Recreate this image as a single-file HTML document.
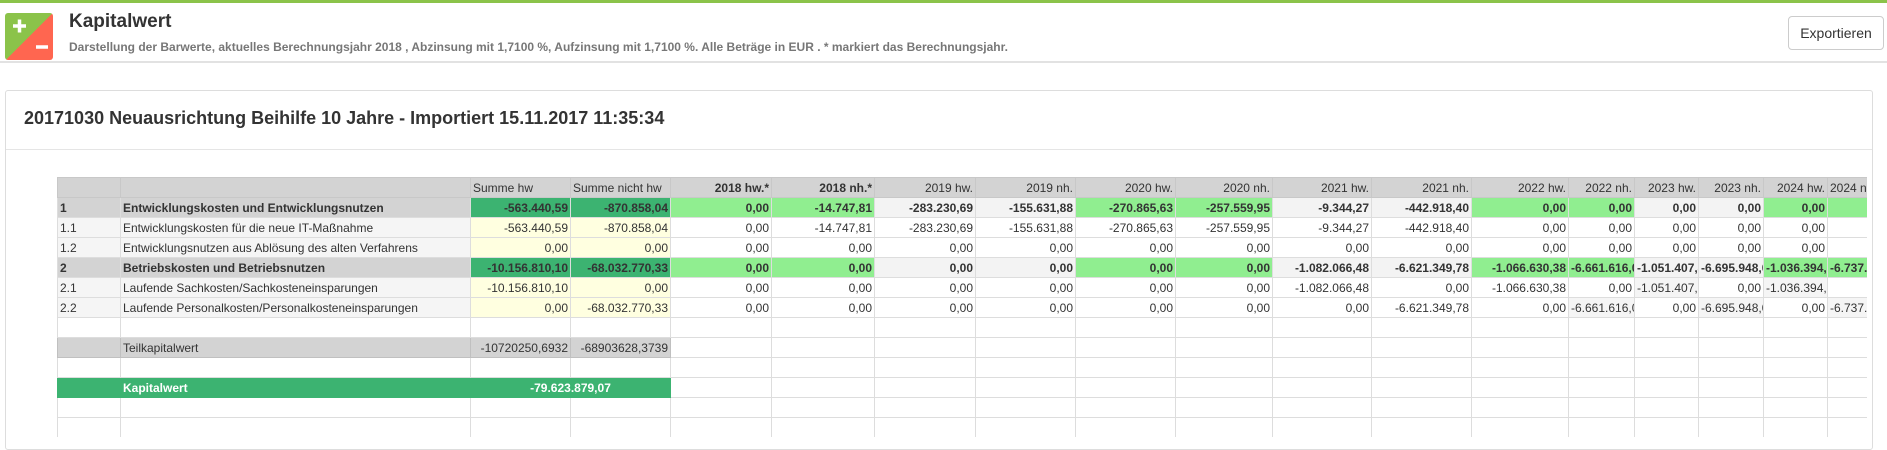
<!DOCTYPE html>
<html><head><meta charset="utf-8">
<style>
*{box-sizing:border-box;margin:0;padding:0}
body{width:1887px;height:426px;overflow:hidden;background:#fff;font-family:"Liberation Sans",Arial,sans-serif;color:#333;position:relative}
.top{position:absolute;left:0;top:0;width:1887px;height:3px;background:#8bc34a}
.hdr{position:absolute;left:0;top:3px;width:1887px;height:60px;border-bottom:2px solid #e2e2e2}
.icon{position:absolute;left:5px;top:10px;width:48px;height:47px;border-radius:3px;overflow:hidden;background:linear-gradient(135deg,#8bc34a 50%,#ff6650 50%)}
.title{position:absolute;left:69px;top:8px;font-size:19px;font-weight:bold;color:#333}
.sub{position:absolute;left:69px;top:37px;font-size:12px;font-weight:bold;color:#777}
.btn{position:absolute;left:1788px;top:13px;width:96px;height:34px;border:1px solid #ccc;border-radius:4px;font-size:14px;text-align:center;line-height:32px;color:#333}
.card{position:absolute;left:5px;top:90px;width:1868px;height:360px;border:1px solid #ddd;border-radius:3px}
.ctitle{position:absolute;left:24px;top:108px;font-size:18px;font-weight:bold;color:#333}
.sep{position:absolute;left:6px;top:149px;width:1866px;height:1px;background:#e5e5e5}
.wrap{position:absolute;left:57px;top:177px;width:1810px;height:260px;overflow:hidden}
table{border-collapse:collapse;table-layout:fixed;font-size:12px;width:1870px}
td{height:20px;border:1px solid #ddd;padding:0 2px;white-space:nowrap;overflow:hidden;text-align:right}
td.l{text-align:left}
tr.h td{background:#d3d3d3;border-color:#c8c8c8}
tr.g td{background:#f3f3f3;font-weight:bold}
tr.s td.l{background:#f5f5f5}
.b{font-weight:bold}
.dg{background:#3cb371!important}
.lg{background:#90ee90!important}
.y{background:#ffffe0}
tr.t td{background:#d3d3d3;border-color:#c0c0c0}
tr.k td.k{background:#3cb371;color:#fff;font-weight:bold;border-color:#3cb371}
</style></head><body>
<div class="top"></div>
<div class="hdr">
<div class="icon"><svg width="48" height="47"><path d="M8 13h13M14.5 6.5v13" stroke="#fff" stroke-width="3.5"/><path d="M31 34h12" stroke="#fff" stroke-width="3.5"/></svg></div>
<div class="title">Kapitalwert</div>
<div class="sub">Darstellung der Barwerte, aktuelles Berechnungsjahr 2018 , Abzinsung mit 1,7100 %, Aufzinsung mit 1,7100 %. Alle Beträge in EUR . * markiert das Berechnungsjahr.</div>
<div class="btn">Exportieren</div>
</div>
<div class="card"></div>
<div class="ctitle">20171030 Neuausrichtung Beihilfe 10 Jahre - Importiert 15.11.2017 11:35:34</div>
<div class="sep"></div>
<div class="wrap">
<table>
<colgroup><col style="width:63px"><col style="width:350px"><col style="width:100px"><col style="width:100px"><col style="width:101px"><col style="width:103px"><col style="width:101px"><col style="width:100px"><col style="width:100px"><col style="width:97px"><col style="width:99px"><col style="width:100px"><col style="width:97px"><col style="width:66px"><col style="width:64px"><col style="width:65px"><col style="width:64px"><col style="width:100px"></colgroup>
<tr class="h"><td></td><td></td><td class="l">Summe hw</td><td class="l">Summe nicht hw</td><td class="b">2018 hw.*</td><td class="b">2018 nh.*</td><td>2019 hw.</td><td>2019 nh.</td><td>2020 hw.</td><td>2020 nh.</td><td>2021 hw.</td><td>2021 nh.</td><td>2022 hw.</td><td>2022 nh.</td><td>2023 hw.</td><td>2023 nh.</td><td>2024 hw.</td><td class="l">2024 nh.</td></tr>
<tr class="g"><td class="l" style="background:#d3d3d3">1</td><td class="l" style="background:#d3d3d3">Entwicklungskosten und Entwicklungsnutzen</td><td class="dg">-563.440,59</td><td class="dg">-870.858,04</td><td class="lg">0,00</td><td class="lg">-14.747,81</td><td>-283.230,69</td><td>-155.631,88</td><td class="lg">-270.865,63</td><td class="lg">-257.559,95</td><td>-9.344,27</td><td>-442.918,40</td><td class="lg">0,00</td><td class="lg">0,00</td><td>0,00</td><td>0,00</td><td class="lg">0,00</td><td class="lg">0,00</td></tr>
<tr class="s"><td class="l">1.1</td><td class="l">Entwicklungskosten für die neue IT-Maßnahme</td><td class="y">-563.440,59</td><td class="y">-870.858,04</td><td>0,00</td><td>-14.747,81</td><td>-283.230,69</td><td>-155.631,88</td><td>-270.865,63</td><td>-257.559,95</td><td>-9.344,27</td><td>-442.918,40</td><td>0,00</td><td>0,00</td><td>0,00</td><td>0,00</td><td>0,00</td><td>0,00</td></tr>
<tr class="s"><td class="l">1.2</td><td class="l">Entwicklungsnutzen aus Ablösung des alten Verfahrens</td><td class="y">0,00</td><td class="y">0,00</td><td>0,00</td><td>0,00</td><td>0,00</td><td>0,00</td><td>0,00</td><td>0,00</td><td>0,00</td><td>0,00</td><td>0,00</td><td>0,00</td><td>0,00</td><td>0,00</td><td>0,00</td><td>0,00</td></tr>
<tr class="g"><td class="l" style="background:#d3d3d3">2</td><td class="l" style="background:#d3d3d3">Betriebskosten und Betriebsnutzen</td><td class="dg">-10.156.810,10</td><td class="dg">-68.032.770,33</td><td class="lg">0,00</td><td class="lg">0,00</td><td>0,00</td><td>0,00</td><td class="lg">0,00</td><td class="lg">0,00</td><td>-1.082.066,48</td><td>-6.621.349,78</td><td class="lg">-1.066.630,38</td><td class="lg l">-6.661.616,07</td><td class="l">-1.051.407,45</td><td class="l">-6.695.948,00</td><td class="lg l">-1.036.394,50</td><td class="lg l">-6.737.000,00</td></tr>
<tr class="s"><td class="l">2.1</td><td class="l">Laufende Sachkosten/Sachkosteneinsparungen</td><td class="y">-10.156.810,10</td><td class="y">0,00</td><td>0,00</td><td>0,00</td><td>0,00</td><td>0,00</td><td>0,00</td><td>0,00</td><td>-1.082.066,48</td><td>0,00</td><td>-1.066.630,38</td><td>0,00</td><td class="l">-1.051.407,45</td><td>0,00</td><td class="l">-1.036.394,50</td><td>0,00</td></tr>
<tr class="s"><td class="l">2.2</td><td class="l">Laufende Personalkosten/Personalkosteneinsparungen</td><td class="y">0,00</td><td class="y">-68.032.770,33</td><td>0,00</td><td>0,00</td><td>0,00</td><td>0,00</td><td>0,00</td><td>0,00</td><td>0,00</td><td>-6.621.349,78</td><td>0,00</td><td class="l">-6.661.616,07</td><td>0,00</td><td class="l">-6.695.948,00</td><td>0,00</td><td class="l">-6.737.000,00</td></tr>
<tr><td></td><td></td><td></td><td></td><td></td><td></td><td></td><td></td><td></td><td></td><td></td><td></td><td></td><td></td><td></td><td></td><td></td><td></td></tr>
<tr class="t"><td></td><td class="l">Teilkapitalwert</td><td>-10720250,6932</td><td>-68903628,3739</td><td style="background:#fff;border-color:#ddd"></td><td style="background:#fff;border-color:#ddd"></td><td style="background:#fff;border-color:#ddd"></td><td style="background:#fff;border-color:#ddd"></td><td style="background:#fff;border-color:#ddd"></td><td style="background:#fff;border-color:#ddd"></td><td style="background:#fff;border-color:#ddd"></td><td style="background:#fff;border-color:#ddd"></td><td style="background:#fff;border-color:#ddd"></td><td style="background:#fff;border-color:#ddd"></td><td style="background:#fff;border-color:#ddd"></td><td style="background:#fff;border-color:#ddd"></td><td style="background:#fff;border-color:#ddd"></td><td style="background:#fff;border-color:#ddd"></td></tr>
<tr><td></td><td></td><td></td><td></td><td></td><td></td><td></td><td></td><td></td><td></td><td></td><td></td><td></td><td></td><td></td><td></td><td></td><td></td></tr>
<tr class="k"><td class="k"></td><td class="k l">Kapitalwert</td><td class="k" colspan="2" style="text-align:center">-79.623.879,07</td><td></td><td></td><td></td><td></td><td></td><td></td><td></td><td></td><td></td><td></td><td></td><td></td><td></td><td></td></tr>
<tr><td></td><td></td><td></td><td></td><td></td><td></td><td></td><td></td><td></td><td></td><td></td><td></td><td></td><td></td><td></td><td></td><td></td><td></td></tr>
<tr><td></td><td></td><td></td><td></td><td></td><td></td><td></td><td></td><td></td><td></td><td></td><td></td><td></td><td></td><td></td><td></td><td></td><td></td></tr>
</table>
</div>
</body></html>
